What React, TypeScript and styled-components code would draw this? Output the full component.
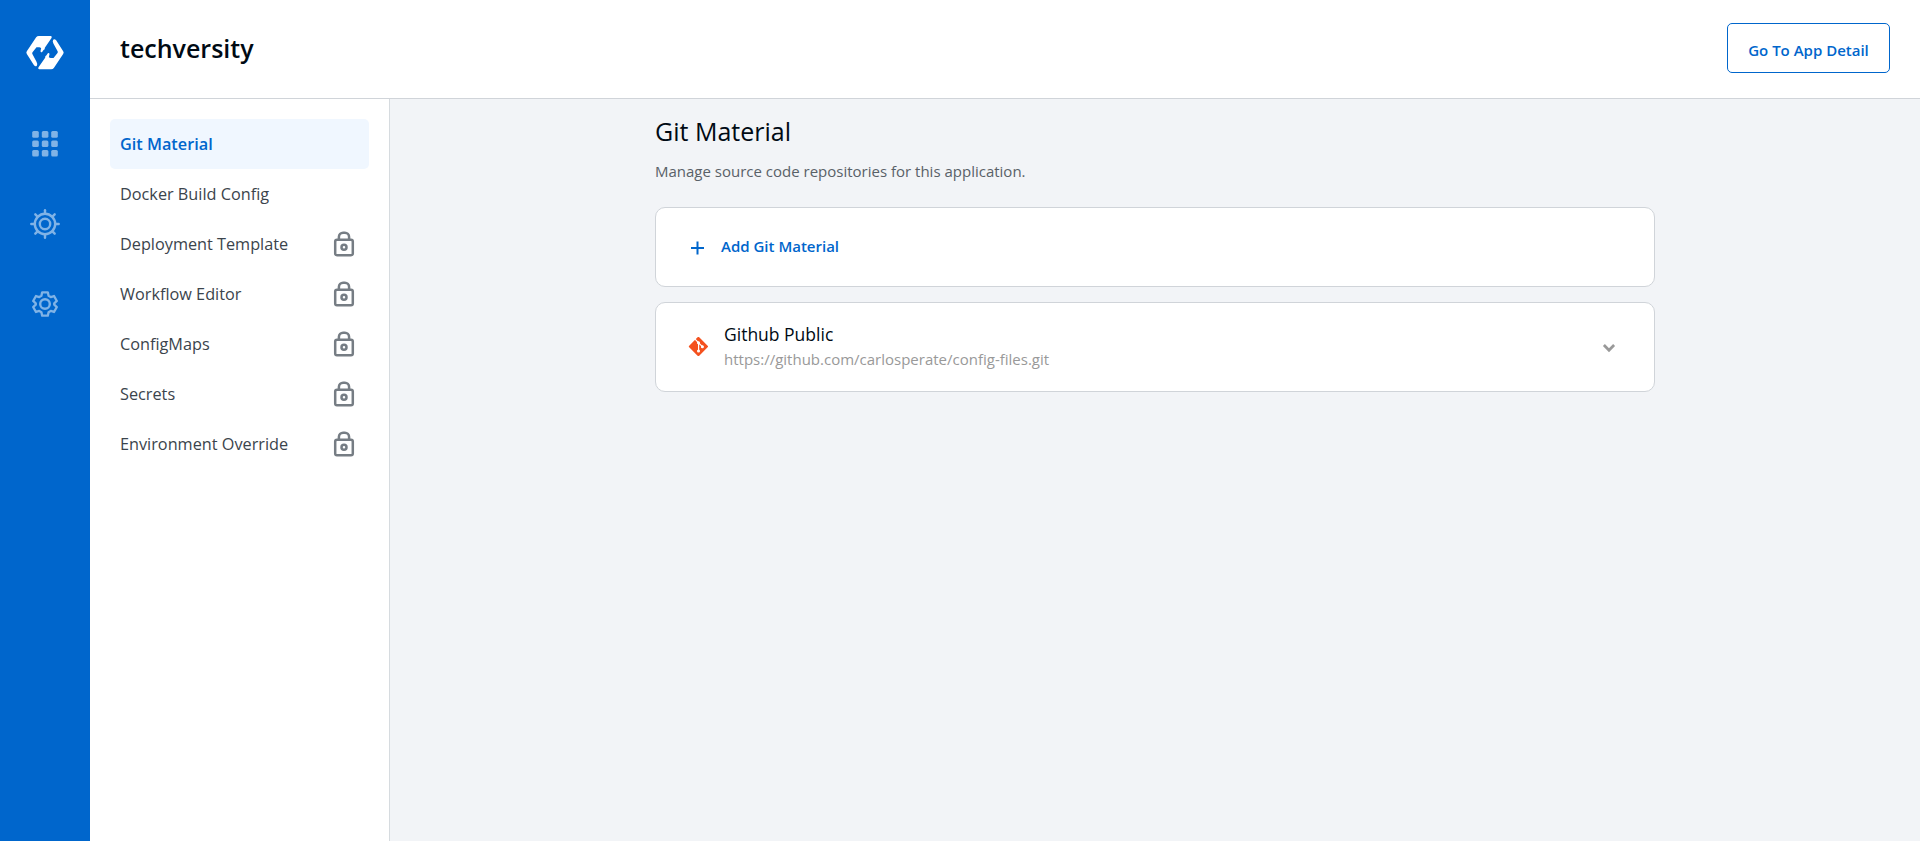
import React from 'react';
import styled, { createGlobalStyle } from 'styled-components';

const GlobalStyle = createGlobalStyle`
  *, *::before, *::after { box-sizing: border-box; }
  body {
    margin: 0;
    font-family: 'Open Sans', 'Noto Sans', sans-serif;
    color: #000a14;
    background: #f2f4f7;
  }
`;

const Shell = styled.div`
  display: grid;
  grid-template-columns: 90px 1fr;
  height: 100vh;
  min-height: 841px;
`;

const Rail = styled.nav`
  display: flex;
  flex-direction: column;
  align-items: center;
  background: #0066cc;
  padding-top: 32px;
`;

const Logo = styled.svg`
  width: 40px;
  height: 40px;
  margin-bottom: 32px;
  fill: #fff;
`;

const RailLink = styled.a`
  display: flex;
  align-items: center;
  justify-content: center;
  width: 90px;
  height: 80px;
  color: #80b3e6;
`;

const Page = styled.div`
  display: grid;
  grid-template-rows: 99px 1fr;
`;

const Header = styled.header`
  display: flex;
  align-items: center;
  justify-content: space-between;
  background: #fff;
  border-bottom: 1px solid #d0d4d9;
  padding: 0 30px 2px;
`;

const AppName = styled.h1`
  margin: 0;
  font-size: 25px;
  font-weight: 600;
  line-height: 34px;
`;

const DetailButton = styled.button`
  width: 163px;
  height: 50px;
  border: 1px solid #0066cc;
  border-radius: 5px;
  background: #fff;
  color: #0066cc;
  font: 600 15px/20px 'Open Sans', sans-serif;
  padding: 4px 0 0;
`;

const Body = styled.div`
  display: grid;
  grid-template-columns: 300px 1fr;
`;

const Steps = styled.aside`
  background: #fff;
  border-right: 1px solid #d6dbdf;
  padding: 20px 20px 0;
`;

const Step = styled.a<{ $active?: boolean }>`
  display: flex;
  align-items: center;
  justify-content: space-between;
  height: 50px;
  width: 259px;
  padding: 0 10px;
  border-radius: 5px;
  font-size: 16.25px;
  line-height: 24px;
  font-weight: ${p => (p.$active ? 600 : 400)};
  color: ${p => (p.$active ? '#0066cc' : '#3b444c')};
  background: ${p => (p.$active ? '#f0f7ff' : 'transparent')};
`;

const Main = styled.main`
  display: flex;
  flex-direction: column;
  align-items: center;
  padding-top: 13px;
`;

const Content = styled.section`
  width: 1000px;
`;

const Title = styled.h2`
  margin: 0;
  font-size: 25px;
  font-weight: 400;
  line-height: 38px;
`;

const Subtitle = styled.p`
  margin: 9px 0 23px;
  font-size: 15px;
  line-height: 25px;
  color: #596168;
`;

const Card = styled.div<{ $height: number }>`
  display: flex;
  align-items: center;
  height: ${p => p.$height}px;
  margin-bottom: 15px;
  padding: 0 32px;
  border: 1px solid #d0d4d9;
  border-radius: 10px;
  background: #fff;
`;

const AddLabel = styled.span`
  margin-left: 13px;
  padding-bottom: 2px;
  font-size: 15px;
  font-weight: 600;
  line-height: 20px;
  color: #0066cc;
`;

const Repo = styled.div`
  flex: 1;
  margin-left: 16px;
`;

const RepoName = styled.div`
  font-size: 17.5px;
  line-height: 25px;
`;

const RepoUrl = styled.div`
  font-size: 15px;
  line-height: 25px;
  color: #999;
`;

const LockIcon = () => (
  <svg width="30" height="30" viewBox="0 0 30 30" fill="none" stroke="#767d84" strokeWidth="2.5">
    <rect x="6.2" y="10.7" width="17.6" height="15.5" rx="1.8" />
    <path d="M9.9 10.7V7.9a4.2 4.2 0 0 1 4.2-4.2h1.8a4.2 4.2 0 0 1 4.2 4.2v2.8" />
    <circle cx="15" cy="18.2" r="2.5" />
  </svg>
);

const AppsIcon = () => (
  <svg width="30" height="30" viewBox="0 0 30 30" fill="currentColor">
    {[2.1, 11.5, 20.9].map(y =>
      [2.2, 11.8, 21.2].map(x => <rect key={`${x}-${y}`} x={x} y={y} width="6.6" height="6.6" rx="1.5" />),
    )}
  </svg>
);

const HelmIcon = () => (
  <svg width="30" height="30" viewBox="0 0 30 30" fill="none" stroke="currentColor" strokeWidth="2.4" strokeLinecap="round">
    <circle cx="15" cy="15" r="10.2" />
    <circle cx="15" cy="15" r="5.2" />
    {[0, 45, 90, 135, 180, 225, 270, 315].map(a => (
      <path key={a} d="M15 4.5V1.3" transform={`rotate(${a} 15 15)`} />
    ))}
  </svg>
);

const GearIcon = () => (
  <svg width="30" height="30" viewBox="0 0 30 30" fill="none" stroke="currentColor" strokeWidth="2.4" strokeLinejoin="round">
    <circle cx="15" cy="15" r="4.8" />
    <path
      d="M12.1 3h5.8l.8 3.6 2.2 1.3 3.4-1.1 2.9 5.1-2.7 2.4v1.4l2.7 2.4-2.9 5.1-3.4-1.1-2.2 1.3-.8 3.6h-5.8l-.8-3.6-2.2-1.3-3.4 1.1-2.9-5.1 2.7-2.4v-1.4l-2.7-2.4 2.9-5.1 3.4 1.1 2.2-1.3z"
      transform="translate(.45 .45) scale(.97)"
    />
  </svg>
);

const half = 'M72 33H108Q113 34 110 39L90 68Q91 73 86 75L82 81Q78 83 77 79L79 69L74 67H65L53 82Q51 85 53 88L65 110Q69 117 66 122Q62 126 57 120L36 87Q33 83 36 79L64 37Q67 33 72 33Z';

const steps = [
  { name: 'Git Material', active: true },
  { name: 'Docker Build Config' },
  { name: 'Deployment Template', locked: true },
  { name: 'Workflow Editor', locked: true },
  { name: 'ConfigMaps', locked: true },
  { name: 'Secrets', locked: true },
  { name: 'Environment Override', locked: true },
];

export default function App() {
  return (
    <>
      <GlobalStyle />
      <Shell>
        <Rail>
          <Logo viewBox="30.5 21 120 120">
            <path d={half} />
            <path d={half} transform="rotate(180 90.5 83)" />
          </Logo>
          <RailLink><AppsIcon /></RailLink>
          <RailLink><HelmIcon /></RailLink>
          <RailLink><GearIcon /></RailLink>
        </Rail>
        <Page>
          <Header>
            <AppName>techversity</AppName>
            <DetailButton>Go To App Detail</DetailButton>
          </Header>
          <Body>
            <Steps>
              {steps.map(s => (
                <Step key={s.name} $active={s.active}>
                  {s.name}
                  {s.locked && <LockIcon />}
                </Step>
              ))}
            </Steps>
            <Main>
              <Content>
                <Title>Git Material</Title>
                <Subtitle>Manage source code repositories for this application.</Subtitle>
                <Card $height={80}>
                  <svg width="20" height="20" viewBox="0 0 20 20" stroke="#0066cc" strokeWidth="2">
                    <path d="M9.5 4.5v13M3 11h13" />
                  </svg>
                  <AddLabel>Add Git Material</AddLabel>
                </Card>
                <Card $height={90}>
                  <svg width="20" height="20" viewBox="0 0 20 20">
                    <rect x="3.3" y="2.4" width="14.2" height="14.2" rx="1.2" fill="#f4511e" transform="rotate(45 10.4 9.5)" />
                    <g stroke="#fff" strokeWidth="1.2" fill="#fff">
                      <path d="M7 2.2l3.6 3.6v8M10.6 5.8l4 4" fill="none" />
                      <circle cx="10.5" cy="5.7" r=".9" />
                      <circle cx="10.5" cy="13.9" r=".9" />
                      <circle cx="14.4" cy="9.7" r=".9" />
                    </g>
                  </svg>
                  <Repo>
                    <RepoName>Github Public</RepoName>
                    <RepoUrl>https://github.com/carlosperate/config-files.git</RepoUrl>
                  </Repo>
                  <svg width="26" height="26" viewBox="0 0 26 26" fill="none" stroke="#999" strokeWidth="2.8">
                    <path d="M7.9 11.1l5.1 5.1 5.1-5.1" />
                  </svg>
                </Card>
              </Content>
            </Main>
          </Body>
        </Page>
      </Shell>
    </>
  );
}
